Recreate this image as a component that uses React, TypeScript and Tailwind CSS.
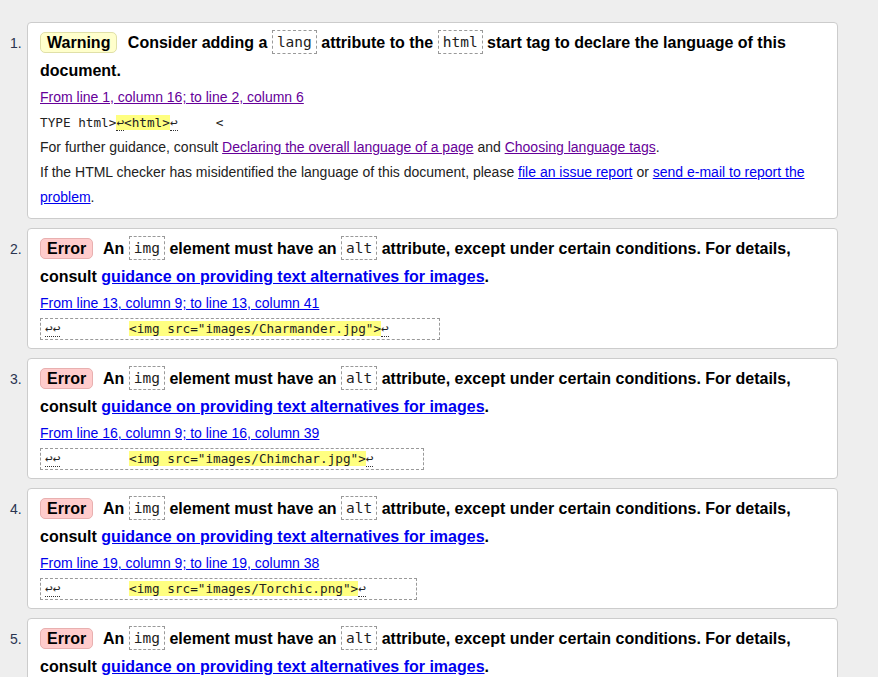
import React from 'react';

const sans = "font-['Liberation_Sans',Arial,sans-serif]";
const mono = "font-['DejaVu_Sans_Mono','Liberation_Mono',monospace]";

const Badge: React.FC<{ kind: 'Warning' | 'Error' }> = ({ kind }) => (
  <strong
    className={`inline-block px-[6px] leading-[19px] rounded-[5px] border mr-[6px] ${
      kind === 'Warning' ? 'bg-[#ffffcc] border-[#e0e0a8]' : 'bg-[#ffcccc] border-[#e8b0b0]'
    }`}
  >
    {kind}
  </strong>
);

const Code: React.FC<{ children: React.ReactNode }> = ({ children }) => (
  <code
    className={`${mono} inline-block font-normal text-[14.5px] leading-[22px] px-[4px] border border-dashed border-[#999] text-[#222] align-middle -mt-[3px]`}
  >
    {children}
  </code>
);

// line feed marker with dotted underline
const Lf: React.FC<{ n?: number }> = ({ n = 1 }) => (
  <span className="border-b border-dotted border-[#333]">{'↩'.repeat(n)}</span>
);

const Card: React.FC<{ num: number; children: React.ReactNode }> = ({ num, children }) => (
  <li className="flex">
    <div className="w-[27px] shrink-0 pl-[10px] pt-[7px] leading-[28px] text-[14px] text-[#2a3450]">{num}.</div>
    <div className="w-[811px] bg-white border border-[#cccccc] rounded-[4px] pl-[12px] pr-[12px] pt-[6px] pb-[8px]">
      {children}
    </div>
  </li>
);

const AltError: React.FC<{ num: number; loc: string; src: string; trail: number }> = ({ num, loc, src, trail }) => (
  <Card num={num}>
    <p className="font-bold text-[16px] leading-[28px] text-black">
      <Badge kind="Error" /> An <Code>img</Code> element must have an <Code>alt</Code> attribute, except under certain
      conditions. For details, consult{' '}
      <a href="#" className="text-[#0000ee] underline">
        guidance on providing text alternatives for images
      </a>
      .
    </p>
    <p className="text-[14px] leading-[25px]">
      <a href="#" className="text-[#0000ee] underline">
        {loc}
      </a>
    </p>
    <div
      className={`${mono} inline-block text-[12.7px] leading-[20px] border border-dashed border-[#999] px-[4px] whitespace-pre text-[#222]`}
    >
      <Lf n={2} />
      {'         '}
      <span className="bg-[#ffff80]">{`<img src="images/${src}">`}</span>
      <Lf />
      {' '.repeat(trail)}
    </div>
  </Card>
);

export default function App() {
  return (
    <div className={`${sans} min-h-screen bg-[#eeeeee] pt-[22px] text-black`}>
      <ol className="flex flex-col gap-[9px]">
        <Card num={1}>
          <p className="font-bold text-[16px] leading-[28px]">
            <Badge kind="Warning" /> Consider adding a <Code>lang</Code> attribute to the <Code>html</Code> start tag
            to declare the language of this document.
          </p>
          <p className="text-[14px] leading-[25px]">
            <a href="#" className="text-[#660099] underline">
              From line 1, column 16; to line 2, column 6
            </a>
          </p>
          <p className={`${mono} text-[12.7px] leading-[25px] whitespace-pre text-[#222]`}>
            TYPE html&gt;
            <span className="bg-[#ffff80]">
              <Lf />
              &lt;html&gt;
            </span>
            <Lf />
            {'     <'}
          </p>
          <p className="text-[14px] leading-[25px] text-[#222]">
            For further guidance, consult{' '}
            <a href="#" className="text-[#660099] underline">
              Declaring the overall language of a page
            </a>{' '}
            and{' '}
            <a href="#" className="text-[#660099] underline">
              Choosing language tags
            </a>
            .
          </p>
          <p className="text-[14px] leading-[25px] text-[#222]">
            If the HTML checker has misidentified the language of this document, please{' '}
            <a href="#" className="text-[#0000ee] underline">
              file an issue report
            </a>{' '}
            or{' '}
            <a href="#" className="text-[#0000ee] underline">
              send e-mail to report the problem
            </a>
            .
          </p>
        </Card>
        <AltError num={2} loc="From line 13, column 9; to line 13, column 41" src="Charmander.jpg" trail={6} />
        <AltError num={3} loc="From line 16, column 9; to line 16, column 39" src="Chimchar.jpg" trail={6} />
        <AltError num={4} loc="From line 19, column 9; to line 19, column 38" src="Torchic.png" trail={6} />
        <AltError num={5} loc="From line 22, column 9; to line 22, column 38" src="Piplup.png" trail={6} />
      </ol>
    </div>
  );
}
